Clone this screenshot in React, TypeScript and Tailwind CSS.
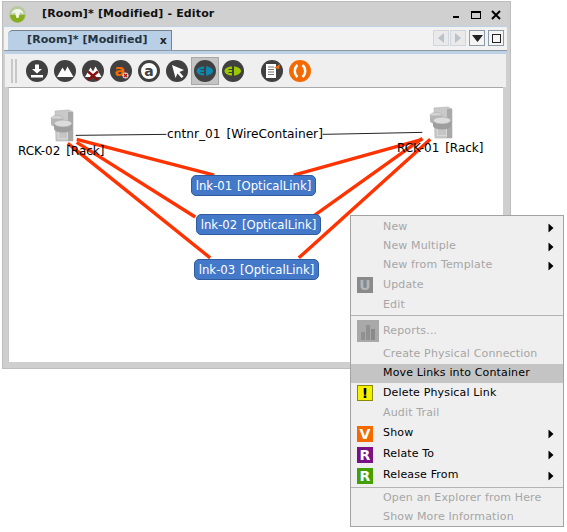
import type { ReactNode } from "react";

function Round({ fill = "#404040", children }: { fill?: string; children: ReactNode }) {
  return (
    <svg width="22" height="22" viewBox="0 0 22 22" className="shrink-0">
      <circle cx="11" cy="11" r="11" fill={fill} />
      {children}
    </svg>
  );
}

function Peaks() {
  return <path d="M3 17 L8.5 7.5 L11 11.5 L13.5 6.5 L19.5 17 Z" fill="#fff" />;
}

function Plug({ color }: { color: string }) {
  return (
    <g fill={color}>
      <path d="M10 6.5 C5 6.5 2.5 9 2.5 11 C2.5 13 5 15.5 10 15.5 L10 13 L6.5 13 L6.5 12 L10 12 L10 10 L6.5 10 L6.5 9 L10 9 Z" />
      <path d="M12 6.5 C16 6.5 19 9 19 11 C19 13 16 15.5 12 15.5 Z" />
    </g>
  );
}

function RackIcon() {
  return (
    <svg width="24" height="33" viewBox="0 0 24 33">
      <path d="M5 2 L19 1 L23 3 L23 32 L6 32 Z" fill="#c9c9c9" stroke="#b0b0b0" strokeWidth="0.6" />
      <rect x="18" y="3" width="5" height="29" fill="#a9a9a9" />
      <rect x="8" y="20" width="10" height="10" fill="#d8d8d8" />
      <path d="M9 22 H17 M9 24 H17 M9 26 H17 M9 28 H17" stroke="#aaa" strokeWidth="0.8" />
      <ellipse cx="7" cy="9.5" rx="6" ry="3" fill="#d4d4d4" stroke="#a5a5a5" strokeWidth="0.5" />
      <path d="M1 9.5 V15 A6 3 0 0 0 13 15 V9.5 Z" fill="#b5b5b5" />
      <path d="M4 15 V20 A8.5 3.2 0 0 0 22 20 V15 Z" fill="#9e9e9e" />
      <ellipse cx="13" cy="14.5" rx="8.8" ry="3.4" fill="#dcdcdc" stroke="#a0a0a0" strokeWidth="0.5" />
    </svg>
  );
}

function Badge({ bg, color = "#fff", letter, border }: { bg: string; color?: string; letter: string; border?: string }) {
  return (
    <div
      className="flex h-4 w-4 items-center justify-center text-[14px] leading-none font-bold"
      style={{ backgroundColor: bg, color, boxShadow: border ? `inset 0 0 0 1px ${border}` : undefined }}
    >
      {letter}
    </div>
  );
}

function MenuItem({
  h,
  label,
  off,
  sub,
  active,
  icon,
}: {
  h: string;
  label: string;
  off?: boolean;
  sub?: boolean;
  active?: boolean;
  icon?: ReactNode;
}) {
  return (
    <div className={`relative flex items-center pl-[32px] ${h} ${active ? "bg-[#c4c4c4]" : ""} ${off ? "text-[#a6a6a6]" : "text-black"}`}>
      {icon && <div className="absolute top-1/2 left-[6px] -translate-y-1/2">{icon}</div>}
      <span className="tracking-[0.15px]">{label}</span>
      {sub && (
        <svg width="6" height="9" viewBox="0 0 6 9" className="absolute top-1/2 right-[9px] -translate-y-1/2">
          <path d="M0.5 0 L5.5 4.5 L0.5 9 Z" fill="#000" />
        </svg>
      )}
    </div>
  );
}

function ContextMenu() {
  return (
    <div className="absolute top-[215px] left-[350px] w-[214px] border border-[#a3a3a3] bg-[#efefef] pt-[2px] text-[11px]">
      <MenuItem h="h-[19px]" label="New" off sub />
      <MenuItem h="h-[19px]" label="New Multiple" off sub />
      <MenuItem h="h-[19px]" label="New from Template" off sub />
      <MenuItem h="h-[20px]" label="Update" off icon={<Badge bg="#8a8a8a" color="#b5b5b5" letter="U" />} />
      <MenuItem h="h-[20px]" label="Edit" off />
      <div className="h-[2px] border-t border-[#b4b4b4]" />
      <MenuItem
        h="h-[27px] pt-[2px]"
        label="Reports..."
        off
        icon={
          <div className="flex h-[22px] w-[22px] items-end justify-center gap-px bg-[#a9a9a9] pb-[2px]">
            <div className="h-[8px] w-[4px] bg-[#909090]" />
            <div className="h-[15px] w-[4px] bg-[#909090]" />
            <div className="h-[11px] w-[4px] bg-[#8a8a8a]" />
          </div>
        }
      />
      <MenuItem h="h-[20px]" label="Create Physical Connection" off />
      <MenuItem h="h-[19px]" label="Move Links into Container" active />
      <MenuItem h="h-[20px]" label="Delete Physical Link" icon={<Badge bg="#f6f000" color="#000" letter="!" border="#8a8a00" />} />
      <MenuItem h="h-[20px]" label="Audit Trail" off />
      <MenuItem h="h-[21px]" label="Show" sub icon={<Badge bg="#f56a00" letter="V" />} />
      <MenuItem h="h-[21px]" label="Relate To" sub icon={<Badge bg="#7a0f86" letter="R" />} />
      <MenuItem h="h-[21px]" label="Release From" sub icon={<Badge bg="#44a000" letter="R" />} />
      <div className="mt-px h-[2px] border-t border-[#b4b4b4]" />
      <MenuItem h="h-[19px]" label="Open an Explorer from Here" off />
      <MenuItem h="h-[18px]" label="Show More Information" off />
    </div>
  );
}

function LinkNode({ label, left, top }: { label: string; left: string; top: string }) {
  return (
    <div
      className={`absolute ${left} ${top} flex h-[21px] w-[125px] items-center justify-center rounded-[5px] border border-[#2f5c9f] bg-[#4478c8] pt-[2px] text-[11.7px] whitespace-nowrap text-white [word-spacing:1px]`}
    >
      {label}
    </div>
  );
}

function Toolbar() {
  return (
    <div className="flex h-[33px] items-center bg-[#efefef] pl-[6px]">
      <div className="mr-[9px] flex h-[24px] gap-[2px]">
        <div className="w-[2px] border-x border-[#c8c8c8]" />
        <div className="w-[2px] border-x border-[#c8c8c8]" />
      </div>
      <div className="flex items-center gap-[6px]">
        <Round>
          <path d="M9 4.5 H13 V9 H16 L11 13.5 L6 9 H9 Z M5 15 H17 V17.5 H5 Z" fill="#fff" />
        </Round>
        <Round>
          <Peaks />
        </Round>
        <Round>
          <Peaks />
          <path d="M6 11.5 L16 20 M16 11.5 L6 20" stroke="#8a1010" strokeWidth="2.6" />
        </Round>
        <Round>
          <text x="10" y="16" textAnchor="middle" fontFamily="DejaVu Sans" fontSize="16" fontWeight="700" fill="#f56a00">
            a
          </text>
          <circle cx="15.5" cy="15.5" r="3" fill="#d9d9d9" />
          <path d="M14 14 L17 17 M17 14 L14 17" stroke="#b01010" strokeWidth="1.2" />
        </Round>
        <svg width="22" height="22" viewBox="0 0 22 22" className="shrink-0">
          <circle cx="11" cy="11" r="9.5" fill="#fff" stroke="#404040" strokeWidth="3" />
          <text x="11" y="16" textAnchor="middle" fontFamily="DejaVu Sans" fontSize="14" fontWeight="700" fill="#404040">
            a
          </text>
        </svg>
        <Round>
          <path d="M6 5 L18 10 L13.5 12 L17.5 16.5 L15.5 18 L11.5 13.5 L9.5 18 Z" fill="#fff" />
        </Round>
        <div className="-mx-[3px] flex h-[28px] w-[28px] items-center justify-center border border-[#a8a8a8] bg-[#c4c4c4]">
          <Round>
            <Plug color="#0f86ad" />
          </Round>
        </div>
        <Round>
          <Plug color="#9ac800" />
        </Round>
      </div>
      <div className="ml-[17px] flex items-center gap-[6px]">
        <Round>
          <path d="M5 4 H15 V18 H5 Z" fill="#fff" />
          <path d="M7 7 H13 M7 9.5 H13 M7 12 H13 M7 14.5 H13" stroke="#777" strokeWidth="1.1" />
          <path d="M13 8 L19 4 L18 9 Z" fill="#f56a00" />
        </Round>
        <Round fill="#f56a00">
          <path d="M8.5 5 A8 8 0 0 0 8.5 17 M13.5 5 A8 8 0 0 1 13.5 17" fill="none" stroke="#fff" strokeWidth="2.4" />
        </Round>
      </div>
    </div>
  );
}

function TabRow() {
  return (
    <div className="flex h-[23px] items-end justify-between bg-[#f2f2f2] pl-[4px]">
      <div className="relative flex h-[20px] w-[164px] items-center rounded-tl-[5px] border-t border-r border-[#77818c] bg-[#b8cfe6] pl-[19px] text-[11px] font-semibold tracking-[0.1px] text-[#263442]">
        [Room]* [Modified]
        <span className="absolute top-[4px] right-[4px] text-[11px] leading-none font-bold text-[#222]">x</span>
      </div>
      <div className="mr-[3px] mb-[1px] flex items-center gap-[1px] self-center">
        <div className="flex h-[16px] w-[16px] items-center justify-center border border-[#cfd6de] bg-[#eaeaea]">
          <svg width="6" height="10" viewBox="0 0 6 10">
            <path d="M6 0 L0 5 L6 10 Z" fill="#b9c3cc" />
          </svg>
        </div>
        <div className="flex h-[16px] w-[16px] items-center justify-center border border-[#cfd6de] bg-[#eaeaea]">
          <svg width="6" height="10" viewBox="0 0 6 10">
            <path d="M0 0 L6 5 L0 10 Z" fill="#b9c3cc" />
          </svg>
        </div>
        <div className="ml-[2px] flex h-[16px] w-[16px] items-center justify-center border border-[#8d9aa8] bg-[#f4f4f4]">
          <svg width="11" height="7" viewBox="0 0 11 7">
            <path d="M0 0 H11 L5.5 7 Z" fill="#222" />
          </svg>
        </div>
        <div className="ml-[2px] flex h-[16px] w-[16px] items-center justify-center border border-[#8d9aa8] bg-[#f4f4f4]">
          <div className="h-[9px] w-[9px] border border-[#222]" />
        </div>
      </div>
    </div>
  );
}

function Canvas() {
  return (
    <div className="relative mx-[4px] h-[275px] border-t border-l border-t-[#a8a8a8] border-l-[#c8c8c8] bg-white font-['DejaVu_Sans',sans-serif] text-black">
      <svg className="absolute inset-0 h-full w-full" viewBox="9 88 496 274">
        <path d="M76 135 L167 134 M324 134 L424 132" stroke="#222" strokeWidth="1" fill="none" />
        <g stroke="#ff3300" strokeWidth="3.4" fill="none">
          <path d="M77 139 L215 175" />
          <path d="M77 142 L196 217" />
          <path d="M68 143 L211 258" />
          <path d="M424 139 L295 175" />
          <path d="M424 138 L316 215" />
          <path d="M432 139 L300 258" />
        </g>
      </svg>
      <div className="absolute top-[21px] left-[41px]">
        <RackIcon />
      </div>
      <div className="absolute top-[18px] left-[420px]">
        <RackIcon />
      </div>
      <div className="absolute top-[54px] left-[9px] text-[12px] whitespace-nowrap [word-spacing:2px]">RCK-02 [Rack]</div>
      <div className="absolute top-[51px] left-[388px] text-[12px] whitespace-nowrap [word-spacing:2px]">RCK-01 [Rack]</div>
      <div className="absolute top-[37px] left-[158px] text-[12.2px] whitespace-nowrap [word-spacing:2px]">cntnr_01 [WireContainer]</div>
      <LinkNode label="lnk-01 [OpticalLink]" left="left-[182px]" top="top-[87px]" />
      <LinkNode label="lnk-02 [OpticalLink]" left="left-[187px]" top="top-[126px]" />
      <LinkNode label="lnk-03 [OpticalLink]" left="left-[185px]" top="top-[171px]" />
    </div>
  );
}

export default function App() {
  return (
    <div className="relative h-[532px] w-[567px] overflow-hidden bg-white font-['DejaVu_Sans',sans-serif]">
      <div className="mt-px ml-[2px] h-[368px] w-[509px] border border-[#bdbdbd] bg-[#cfcfcf] p-px pr-[3px]">
        <div className="flex h-[23px] items-center justify-between bg-[#d0d0d0] pr-[6px] pl-[5px]">
          <div className="flex items-center">
            <svg width="17" height="17" viewBox="0 0 17 17">
              <circle cx="8.5" cy="8.5" r="8.5" fill="#b8c8a0" />
              <path d="M1 9 A7.5 7.5 0 0 0 16 9 Z" fill="#86ad1c" />
              <path d="M8.5 3 C5 3 3 5 2.5 8 L6 6.5 L7.5 12 H9.5 L11 6.5 L14.5 8 C14 5 12 3 8.5 3 Z" fill="#f2f6e6" />
            </svg>
            <span className="ml-[16px] text-[11px] font-bold tracking-[0.15px] text-[#111]">[Room]* [Modified] - Editor</span>
          </div>
          <div className="flex items-center">
            <div className="mt-[4px] h-[2px] w-[6px] bg-black" />
            <div className="ml-[12px] h-[8px] w-[10px] border border-t-2 border-black" />
            <svg width="10" height="10" viewBox="0 0 10 10" className="ml-[10px]">
              <path d="M1 1 L9 9 M9 1 L1 9" stroke="#000" strokeWidth="2" />
            </svg>
          </div>
        </div>
        <div className="h-px bg-[#bcd0e6]" />
        <TabRow />
        <div className="h-[1px] bg-[#8d98a3]" />
        <div className="h-[3px] bg-[#bcd0e6]" />
        <div className="mx-px">
          <Toolbar />
        </div>
        <Canvas />
      </div>
      <ContextMenu />
    </div>
  );
}
